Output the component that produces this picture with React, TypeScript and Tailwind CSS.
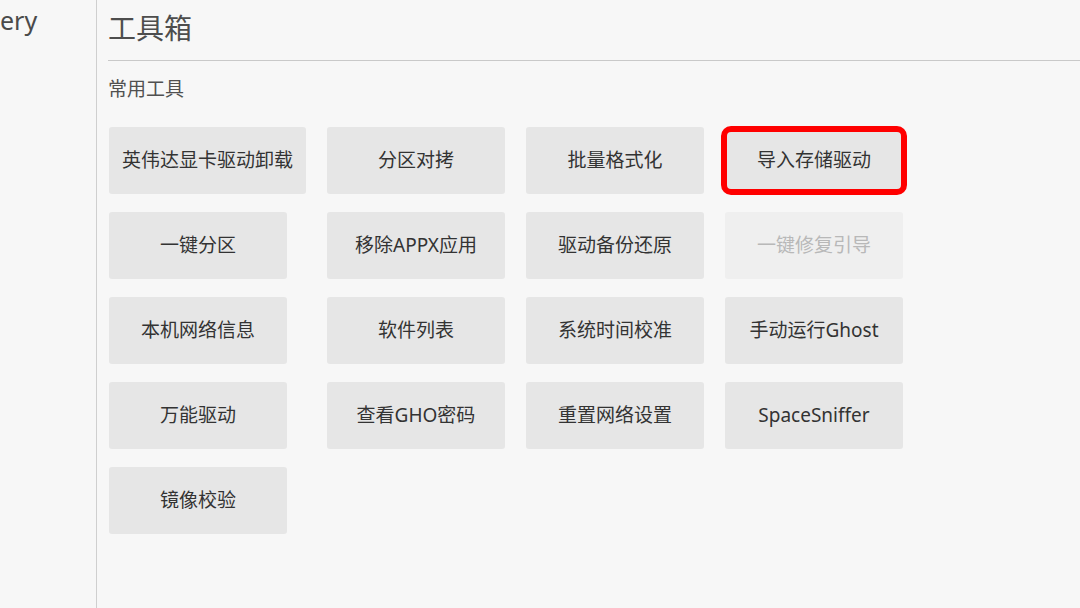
const tools = [
  { name: "英伟达显卡驱动卸载" },
  { name: "分区对拷" },
  { name: "批量格式化" },
  { name: "导入存储驱动", marked: true },
  { name: "一键分区" },
  { name: "移除APPX应用" },
  { name: "驱动备份还原" },
  { name: "一键修复引导", disabled: true },
  { name: "本机网络信息" },
  { name: "软件列表" },
  { name: "系统时间校准" },
  { name: "手动运行Ghost" },
  { name: "万能驱动" },
  { name: "查看GHO密码" },
  { name: "重置网络设置" },
  { name: "SpaceSniffer" },
  { name: "镜像校验" },
];

export default function App() {
  return (
    <div
      className="flex h-[608px] w-[1080px] overflow-hidden bg-[#f7f7f7] text-[#333]"
      style={{ fontFamily: '"Noto Sans", "Noto Sans CJK SC", sans-serif' }}
    >
      {/* Sidebar */}
      <div className="w-[97px] shrink-0 border-r border-[#cfcfcf]">
        <div className="pt-[2px] text-[25px] leading-[36px] text-[#4a4a4a]">ery</div>
      </div>

      {/* Main */}
      <div className="flex-1 pl-[11px]">
        <div className="h-[61px] border-b border-[#c9c9c9] pt-[8px]">
          <h1 className="text-[28px] leading-[40px] text-[#4d4d4d]">工具箱</h1>
        </div>

        <h2 className="mt-[16px] text-[19px] leading-[24px] text-[#505050]">常用工具</h2>

        <div className="mt-[26px] grid grid-cols-[197px_178px_178px_178px] gap-x-[21px] gap-y-[18px] pl-[1px]">
          {tools.map((t, i) => (
            <div key={t.name} className="relative">
              <button
                className={
                  "flex h-[67px] items-center justify-center rounded-[3px] text-[19px] " +
                  (i === 0 ? "w-[197px] " : "w-[178px] ") +
                  (t.disabled ? "bg-[#efefef] text-[#b8b8b8]" : "bg-[#e6e6e6] text-[#333]")
                }
              >
                {t.name}
              </button>
              {t.marked && (
                <div className="absolute -inset-x-[4px] -inset-y-[1px] rounded-[10px] border-[6px] border-[#ff0000]" />
              )}
            </div>
          ))}
        </div>
      </div>
    </div>
  );
}
